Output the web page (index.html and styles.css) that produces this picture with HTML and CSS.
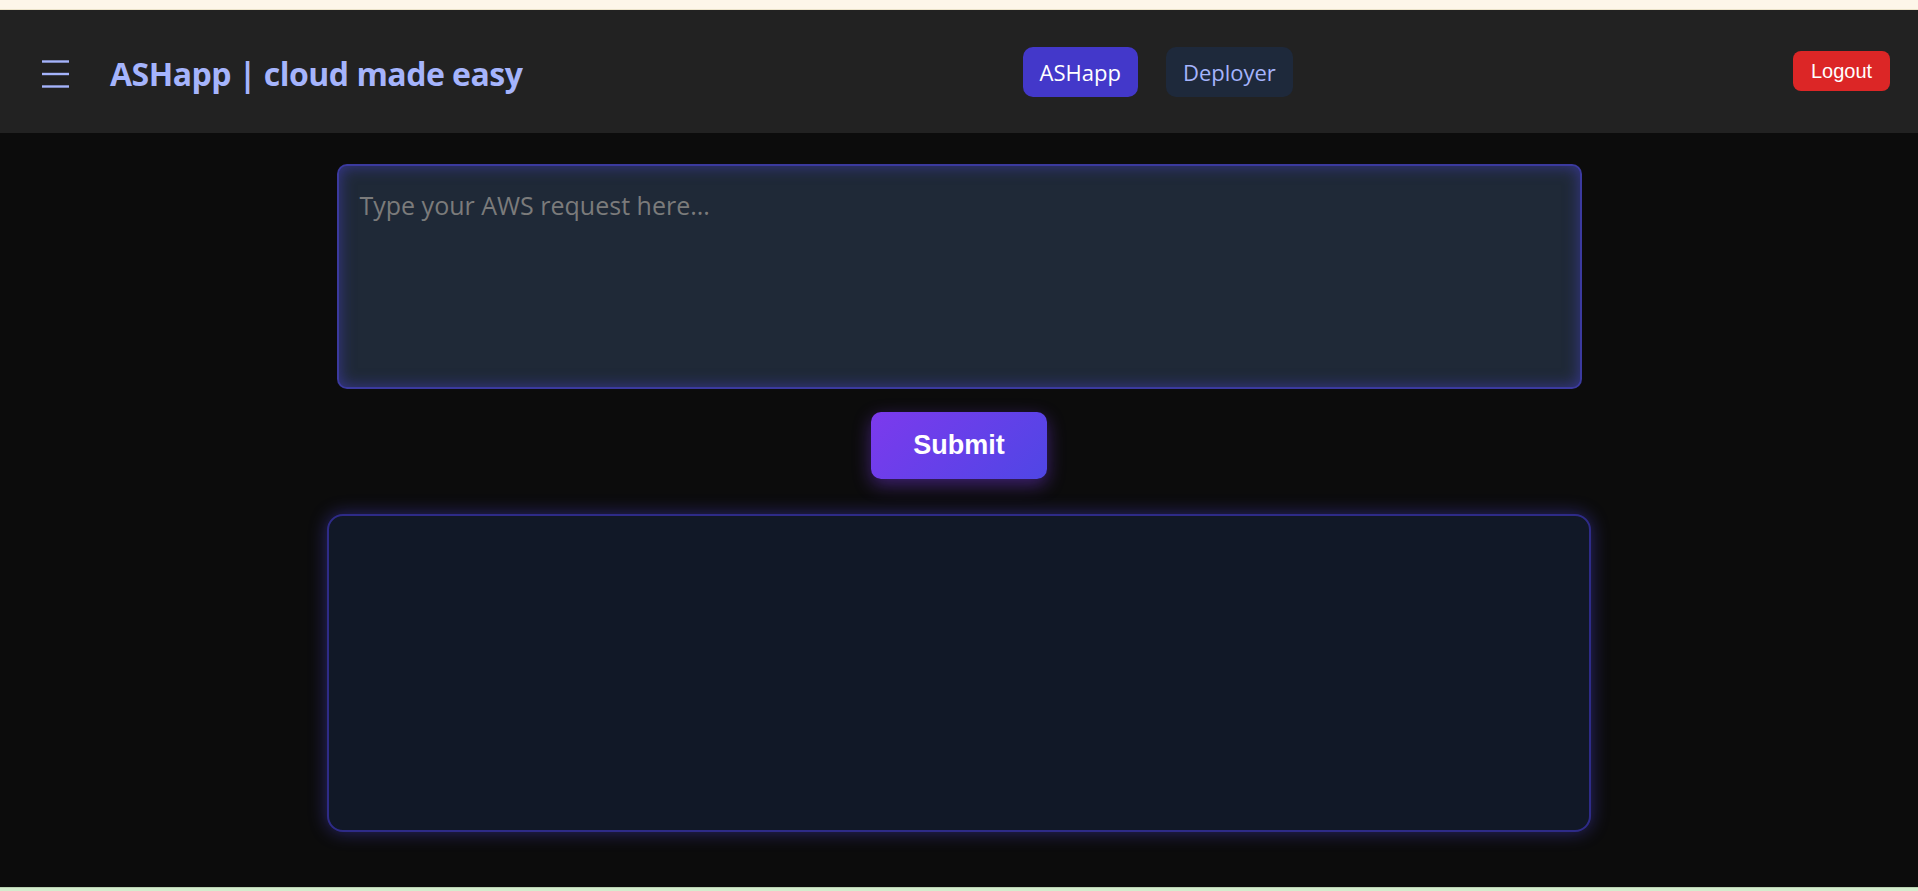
FILE: index.html
```html
<!DOCTYPE html>
<html lang="en">
<head>
<meta charset="utf-8">
<title>ASHapp | cloud made easy</title>
<link rel="stylesheet" href="styles.css">
</head>
<body>
<div class="top-strip"></div>
<header class="header">
  <div class="brand">
    <button class="menu-btn" aria-label="Menu">
      <svg width="28" height="28" viewBox="0 0 28 28" fill="none" stroke="#a5b4fc" stroke-width="2.4">
        <line x1="0" y1="1.5" x2="27" y2="1.5"/>
        <line x1="0" y1="14" x2="27" y2="14"/>
        <line x1="0" y1="26.5" x2="27" y2="26.5"/>
      </svg>
    </button>
    <h1 class="title">ASHapp | cloud made easy</h1>
  </div>
  <nav class="nav">
    <a class="nav-btn active">ASHapp</a>
    <a class="nav-btn">Deployer</a>
  </nav>
  <button class="logout">Logout</button>
</header>
<main class="main">
  <textarea class="request" placeholder="Type your AWS request here..."></textarea>
  <button class="submit">Submit</button>
  <section class="output"></section>
</main>
<div class="bottom-strip"></div>
</body>
</html>
```

FILE: styles.css
```css
* { box-sizing: border-box; }
html, body { margin: 0; padding: 0; }
body {
  background: #0c0c0c;
  font-family: "Open Sans", "Noto Sans", sans-serif;
  height: 891px;
  overflow: hidden;
  display: flex;
  flex-direction: column;
}
.top-strip {
  height: 10px;
  background: #fdf6e9;
  border-bottom: 1px solid #ebe3c9;
  box-shadow: inset 0 -2px 0 #fdf6e9;
}
.header {
  height: 123px;
  background: #222222;
  display: flex;
  align-items: center;
  justify-content: space-between;
  padding: 0 28px 0 42px;
}
.brand {
  display: flex;
  align-items: center;
  gap: 40px;
}
.menu-btn {
  background: none;
  border: none;
  padding: 0;
  display: flex;
  margin-top: 4px;
}
.title {
  margin: 0;
  font-family: "Open Sans", sans-serif;
  font-weight: 700;
  font-size: 32px;
  letter-spacing: -0.5px;
  color: #a5b4fc;
  margin-top: 4px;
}
.nav {
  display: flex;
  gap: 28px;
  margin-top: 1px;
}
.nav-btn {
  height: 50px;
  padding: 0 17px;
  border-radius: 10px;
  display: flex;
  align-items: center;
  font-size: 22px;
  background: #1e293b;
  color: #a5b4fc;
  cursor: pointer;
}
.nav-btn.active {
  background: #4338ca;
  color: #ffffff;
}
.logout {
  width: 97px;
  height: 40px;
  border: none;
  border-radius: 8px;
  background: #dc2626;
  color: #ffffff;
  font-family: "Liberation Sans", Arial, sans-serif;
  font-size: 20px;
  margin-top: -1px;
}
.main {
  flex: 1;
  display: flex;
  flex-direction: column;
  align-items: center;
  padding-top: 31px;
}
.request {
  width: 1245px;
  height: 225px;
  background: #1f2937;
  border: 2px solid rgba(79, 70, 229, 0.6);
  border-radius: 10px;
  box-shadow: inset 0 0 16px rgba(79, 70, 229, 0.5);
  padding: 22px 21px;
  resize: none;
  font-family: "Open Sans", sans-serif;
  font-size: 25px;
  color: #e5e7eb;
  outline: none;
}
.request::placeholder {
  color: #7b7b7b;
}
.submit {
  margin-top: 23px;
  width: 176px;
  height: 67px;
  border: none;
  border-radius: 10px;
  background: linear-gradient(135deg, #7c3aed, #4f46e5);
  box-shadow: 0 6px 18px rgba(124, 58, 237, 0.45);
  color: #ffffff;
  font-family: "Liberation Sans", Arial, sans-serif;
  font-weight: 700;
  font-size: 27px;
}
.output {
  margin-top: 35px;
  width: 1264px;
  height: 318px;
  background: #111827;
  border: 2px solid rgba(67, 56, 202, 0.6);
  border-radius: 16px;
  box-shadow: 0 0 18px rgba(79, 70, 229, 0.45);
}
.bottom-strip {
  height: 4px;
  background: #d3edcd;
  border-top: 1px solid #b9d1b1;
}
```
